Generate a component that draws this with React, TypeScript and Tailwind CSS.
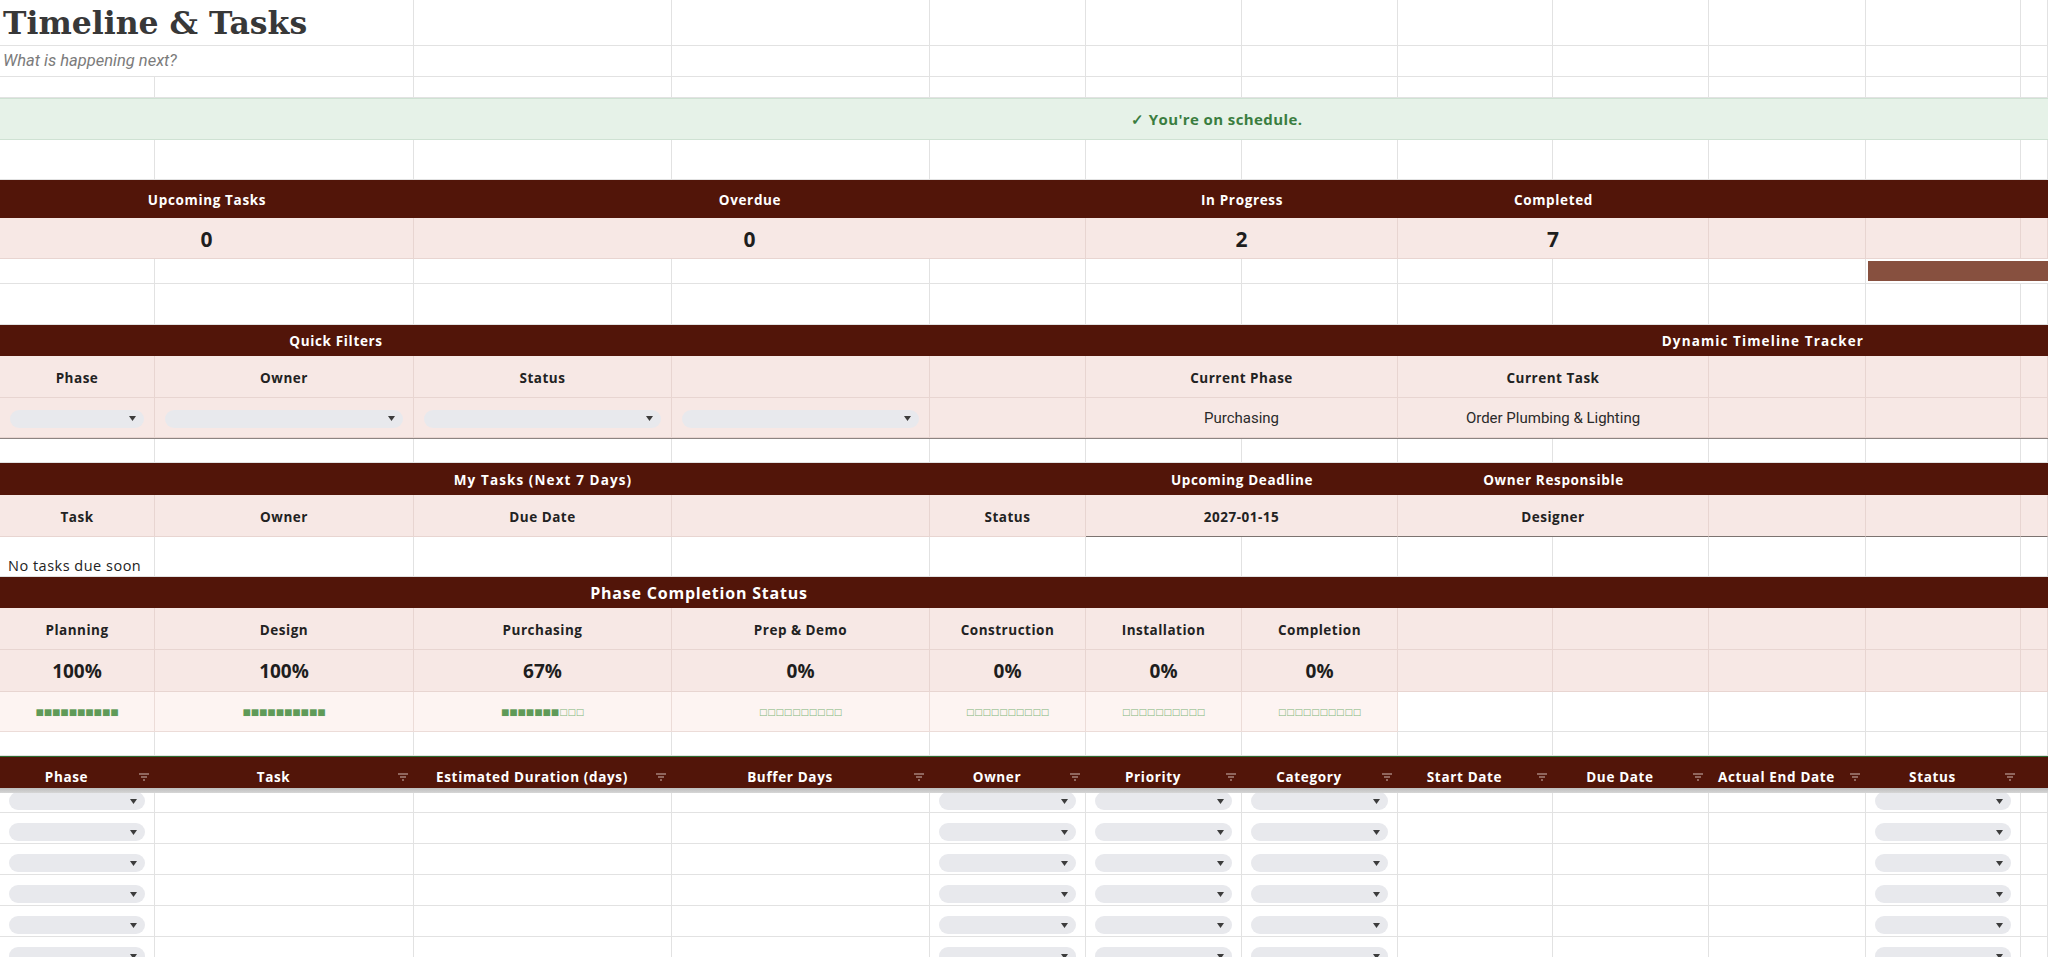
import clsx from "clsx";
import type { ReactNode } from "react";

const GRID =
  "grid grid-cols-[155px_259px_258px_258px_156px_156px_156px_155px_156px_157px_155px_27px]";

const SPAN: Record<number, string> = {
  1: "col-span-1",
  2: "col-span-2",
  3: "col-span-3",
  5: "col-span-5",
  7: "col-span-7",
  12: "col-span-12",
};

type Tone = "white" | "dark" | "pink" | "soft";

const TONE: Record<Tone, string> = {
  white: "bg-white border-r border-b border-[#e2e2e2]",
  dark: "bg-[#521509]",
  pink: "bg-[#f7e8e5] border-r border-b border-[#e8d5d1]",
  soft: "bg-[#fdf4f2] border-r border-b border-[#ecdcd8]",
};

const HEAD =
  "font-['Open_Sans',sans-serif] font-bold text-[13.5px] tracking-[0.65px] text-white pt-[2px]";
const LABEL =
  "font-['Open_Sans',sans-serif] font-bold text-[13.5px] tracking-[0.5px] text-[#222] pt-[3px]";

function Cell({
  span = 1,
  tone = "white",
  className,
  children,
}: {
  span?: number;
  tone?: Tone;
  className?: string;
  children?: ReactNode;
}) {
  return (
    <div className={clsx(SPAN[span], TONE[tone], "min-w-0 overflow-hidden", className)}>
      {children}
    </div>
  );
}

function blanks(n: number, tone: Tone = "white") {
  return Array.from({ length: n }, (_, i) => <Cell key={`b${i}`} tone={tone} />);
}

function Chip({ className }: { className?: string }) {
  return (
    <div
      className={clsx(
        "flex h-[18px] items-center justify-end rounded-full bg-[#e8e9ed] pr-[8px]",
        className
      )}
    >
      <svg width="7" height="5" viewBox="0 0 7 5">
        <path d="M0 0h7L3.5 5z" fill="#3c3c3c" />
      </svg>
    </div>
  );
}

function FilterIcon() {
  return (
    <svg width="10" height="8" viewBox="0 0 10 8">
      <path d="M0 1h10M2 4h6M4 7h2" stroke="#cdb8b2" strokeWidth="1.2" />
    </svg>
  );
}

function Center({ children, className }: { children?: ReactNode; className?: string }) {
  return <div className={clsx("flex h-full items-center justify-center", className)}>{children}</div>;
}

function Bar({ pct }: { pct: number }) {
  const filled = Math.round(pct / 10);
  return (
    <Center className="pt-[2px]">
      <span className="font-['DejaVu_Sans',sans-serif] text-[8.8px]">
        <span className="text-[#5f9a58]">{"■".repeat(filled)}</span>
        <span className="text-[#7fb77a]">{"□".repeat(10 - filled)}</span>
      </span>
    </Center>
  );
}

const phases = [
  { name: "Planning", pct: 100 },
  { name: "Design", pct: 100 },
  { name: "Purchasing", pct: 67 },
  { name: "Prep & Demo", pct: 0 },
  { name: "Construction", pct: 0 },
  { name: "Installation", pct: 0 },
  { name: "Completion", pct: 0 },
];

const tableCols = [
  { label: "Phase", chip: true },
  { label: "Task" },
  { label: "Estimated Duration (days)" },
  { label: "Buffer Days" },
  { label: "Owner", chip: true },
  { label: "Priority", chip: true },
  { label: "Category", chip: true },
  { label: "Start Date" },
  { label: "Due Date" },
  { label: "Actual End Date" },
  { label: "Status", chip: true },
];

export default function App() {
  return (
    <div className="h-[957px] w-[2048px] overflow-hidden bg-white font-['Open_Sans',sans-serif]">
      {/* title */}
      <div className={clsx(GRID, "h-[46px]")}>
        <Cell span={2} className="flex items-end pb-[7px] pl-[3px]">
          <span className="whitespace-nowrap font-['DejaVu_Serif',serif] text-[31.5px] font-bold leading-none text-[#383838]">
            Timeline &amp; Tasks
          </span>
        </Cell>
        {blanks(10)}
      </div>
      <div className={clsx(GRID, "h-[31px]")}>
        <Cell span={2} className="flex items-center pl-[3px]">
          <span className="font-['Roboto',sans-serif] text-[16.5px] italic text-[#7b7b7b]">
            What is happening next?
          </span>
        </Cell>
        {blanks(10)}
      </div>
      <div className={clsx(GRID, "h-[21px]")}>{blanks(12)}</div>

      {/* schedule banner */}
      <div className="flex h-[42px] items-center border-y border-[#cfe2d3] bg-[#e6f2e8] pl-[1131px]">
        <span className="font-['Open_Sans',sans-serif] text-[15px] font-bold tracking-[0.4px] text-[#3a7d40]">
          ✓ You're on schedule.
        </span>
      </div>
      <div className={clsx(GRID, "h-[40px]")}>{blanks(12)}</div>

      {/* stats */}
      <div className={clsx(GRID, "h-[38px]")}>
        <Cell span={2} tone="dark"><Center className={HEAD}>Upcoming Tasks</Center></Cell>
        <Cell span={3} tone="dark"><Center className={HEAD}>Overdue</Center></Cell>
        <Cell span={2} tone="dark"><Center className={HEAD}>In Progress</Center></Cell>
        <Cell span={2} tone="dark"><Center className={HEAD}>Completed</Center></Cell>
        {blanks(3, "dark")}
      </div>
      <div className={clsx(GRID, "h-[41px]")}>
        {[
          { span: 2, v: "0" },
          { span: 3, v: "0" },
          { span: 2, v: "2" },
          { span: 2, v: "7" },
        ].map((s, i) => (
          <Cell key={i} span={s.span} tone="pink">
            <Center className="pt-[4px] text-[21px] font-bold text-[#1e1e1e]">{s.v}</Center>
          </Cell>
        ))}
        {blanks(3, "pink")}
      </div>
      <div className={clsx(GRID, "h-[25px]")}>
        {blanks(10)}
        <div className="col-span-2 border-b border-[#e2e2e2] pt-[2px] pl-[2px]">
          <div className="h-[20px] bg-[#87503f]" />
        </div>
      </div>
      <div className={clsx(GRID, "h-[41px]")}>{blanks(12)}</div>

      {/* quick filters */}
      <div className={clsx(GRID, "h-[31px]")}>
        <Cell span={3} tone="dark"><Center className={HEAD}>Quick Filters</Center></Cell>
        <Cell span={7} tone="dark">
          <div
            className={clsx(
              HEAD,
              "flex h-full items-center justify-end pr-[2px] tracking-[1.1px]"
            )}
          >
            Dynamic Timeline Tracker
          </div>
        </Cell>
        {blanks(2, "dark")}
      </div>
      <div className={clsx(GRID, "h-[42px]")}>
        <Cell tone="pink"><Center className={LABEL}>Phase</Center></Cell>
        <Cell tone="pink"><Center className={LABEL}>Owner</Center></Cell>
        <Cell tone="pink"><Center className={LABEL}>Status</Center></Cell>
        {blanks(2, "pink")}
        <Cell span={2} tone="pink"><Center className={LABEL}>Current Phase</Center></Cell>
        <Cell span={2} tone="pink"><Center className={LABEL}>Current Task</Center></Cell>
        {blanks(3, "pink")}
      </div>
      <div className={clsx(GRID, "h-[41px] border-b border-[#8c8482]")}>
        {[0, 1, 2, 3].map((i) => (
          <Cell key={i} tone="pink" className="flex items-center px-[10px] pt-[2px]">
            <Chip className="w-full" />
          </Cell>
        ))}
        <Cell tone="pink" />
        <Cell span={2} tone="pink">
          <Center className="pt-[2px] font-['Roboto',sans-serif] text-[15px] text-[#2a2a2a]">
            Purchasing
          </Center>
        </Cell>
        <Cell span={2} tone="pink">
          <Center className="pt-[2px] font-['Roboto',sans-serif] text-[15px] text-[#2a2a2a]">
            Order Plumbing &amp; Lighting
          </Center>
        </Cell>
        {blanks(3, "pink")}
      </div>
      <div className={clsx(GRID, "h-[24px]")}>{blanks(12)}</div>

      {/* my tasks */}
      <div className={clsx(GRID, "h-[32px]")}>
        <Cell span={5} tone="dark">
          <Center className={clsx(HEAD, "tracking-[1.1px]")}>My Tasks (Next 7 Days)</Center>
        </Cell>
        <Cell span={2} tone="dark"><Center className={HEAD}>Upcoming Deadline</Center></Cell>
        <Cell span={2} tone="dark"><Center className={HEAD}>Owner Responsible</Center></Cell>
        {blanks(3, "dark")}
      </div>
      <div className={clsx(GRID, "h-[42px]")}>
        <Cell tone="pink"><Center className={LABEL}>Task</Center></Cell>
        <Cell tone="pink"><Center className={LABEL}>Owner</Center></Cell>
        <Cell tone="pink"><Center className={LABEL}>Due Date</Center></Cell>
        <Cell tone="pink" />
        <Cell tone="pink"><Center className={LABEL}>Status</Center></Cell>
        <Cell span={2} tone="pink" className="border-b-[#7c7370]">
          <Center className={LABEL}>2027-01-15</Center>
        </Cell>
        <Cell span={2} tone="pink" className="border-b-[#7c7370]">
          <Center className={LABEL}>Designer</Center>
        </Cell>
        <Cell tone="pink" className="border-b-[#7c7370]" />
        <Cell tone="pink" className="border-b-[#7c7370]" />
        <Cell tone="pink" className="border-b-[#7c7370]" />
      </div>
      <div className={clsx(GRID, "h-[40px]")}>
        <Cell className="flex items-end pl-[8px]">
          <span className="whitespace-nowrap text-[14.5px] leading-[20px] tracking-[0.5px] text-[#222]">
            No tasks due soon
          </span>
        </Cell>
        {blanks(11)}
      </div>

      {/* phase completion */}
      <div className={clsx(GRID, "h-[31px]")}>
        <Cell span={7} tone="dark">
          <Center className="font-['Open_Sans',sans-serif] text-[16px] font-bold tracking-[0.8px] text-white">
            Phase Completion Status
          </Center>
        </Cell>
        {blanks(5, "dark")}
      </div>
      <div className={clsx(GRID, "h-[42px]")}>
        {phases.map((p) => (
          <Cell key={p.name} tone="pink"><Center className={LABEL}>{p.name}</Center></Cell>
        ))}
        {blanks(5, "pink")}
      </div>
      <div className={clsx(GRID, "h-[42px]")}>
        {phases.map((p) => (
          <Cell key={p.name} tone="pink">
            <Center className="pt-[1px] text-[19px] font-bold text-[#1e1e1e]">{p.pct}%</Center>
          </Cell>
        ))}
        {blanks(5, "pink")}
      </div>
      <div className={clsx(GRID, "h-[40px]")}>
        {phases.map((p) => (
          <Cell key={p.name} tone="soft"><Bar pct={p.pct} /></Cell>
        ))}
        {blanks(5)}
      </div>
      <div className={clsx(GRID, "h-[24px]")}>{blanks(12)}</div>

      {/* task table */}
      <div className={clsx(GRID, "h-[32px] border-t border-[#2e6b30] bg-[#521509]")}>
        {tableCols.map((c) => (
          <div key={c.label} className="flex items-end pb-[1px]">
            <span className={clsx(HEAD, "flex-1 whitespace-nowrap pt-0 text-center")}>{c.label}</span>
            <span className="flex w-[22px] justify-center pb-[6px]">
              <FilterIcon />
            </span>
          </div>
        ))}
        <div />
      </div>
      <div className="h-[5px] bg-gradient-to-b from-[#bdbdbd] to-[#d6d6d6]" />
      {[20, 31, 31, 31, 31, 31].map((h, r) => (
        <div key={r} className={clsx(GRID, h === 20 ? "h-[20px]" : "h-[31px]")}>
          {tableCols.map((c) => (
            <Cell key={c.label} className="flex items-end px-[9px] pb-[2px]">
              {c.chip && <Chip className="w-full" />}
            </Cell>
          ))}
          <Cell />
        </div>
      ))}
    </div>
  );
}
